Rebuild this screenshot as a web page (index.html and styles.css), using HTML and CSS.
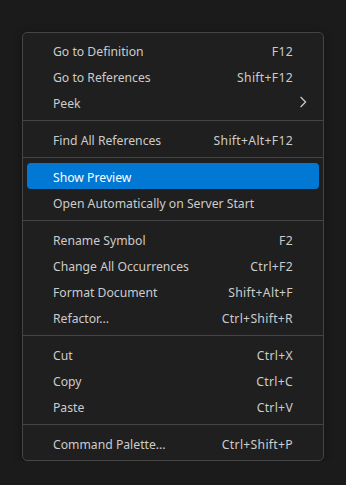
FILE: index.html
```html
<!DOCTYPE html>
<html>
<head>
<meta charset="utf-8">
<link rel="stylesheet" href="styles.css">
</head>
<body>
<div class="page">
  <div class="menu">
    <div class="item"><span class="label">Go to Definition</span><span class="key">F12</span></div>
    <div class="item"><span class="label">Go to References</span><span class="key">Shift+F12</span></div>
    <div class="item"><span class="label">Peek</span><span class="key"></span><span class="sub"><svg width="16" height="16" viewBox="0 0 16 16"><path d="M5.6 3 L10.6 8 L5.6 13" fill="none" stroke="#cccccc" stroke-width="1.2"/></svg></span></div>
    <div class="sep"></div>
    <div class="item"><span class="label">Find All References</span><span class="key">Shift+Alt+F12</span></div>
    <div class="sep"></div>
    <div class="item active"><span class="label">Show Preview</span><span class="key"></span></div>
    <div class="item"><span class="label">Open Automatically on Server Start</span><span class="key"></span></div>
    <div class="sep"></div>
    <div class="item"><span class="label">Rename Symbol</span><span class="key">F2</span></div>
    <div class="item"><span class="label">Change All Occurrences</span><span class="key">Ctrl+F2</span></div>
    <div class="item"><span class="label">Format Document</span><span class="key">Shift+Alt+F</span></div>
    <div class="item"><span class="label">Refactor...</span><span class="key">Ctrl+Shift+R</span></div>
    <div class="sep"></div>
    <div class="item"><span class="label">Cut</span><span class="key">Ctrl+X</span></div>
    <div class="item"><span class="label">Copy</span><span class="key">Ctrl+C</span></div>
    <div class="item"><span class="label">Paste</span><span class="key">Ctrl+V</span></div>
    <div class="sep"></div>
    <div class="item"><span class="label">Command Palette...</span><span class="key">Ctrl+Shift+P</span></div>
  </div>
</div>
</body>
</html>
```
FILE: styles.css
```css
html, body {
  margin: 0;
  padding: 0;
  background: #1b1b1b;
}
.page {
  padding: 32px 0 0 22px;
  display: flex;
  align-items: flex-start;
}
.menu {
  width: 302px;
  box-sizing: border-box;
  background: #1f1f1f;
  border: 1px solid #454545;
  border-radius: 5px;
  padding: 4px 0;
  box-shadow: 0 2px 8px rgba(0, 0, 0, 0.36);
  font-family: "Segoe UI", "Noto Sans", sans-serif;
  font-size: 12.2px;
  color: #cccccc;
}
.item {
  display: grid;
  grid-template-columns: 1fr auto 18px;
  align-items: center;
  box-sizing: border-box;
  height: 26px;
  margin: 0 4px;
  padding: 2px 8px 0 26px;
  border-radius: 4px;
  white-space: nowrap;
}
.item.active {
  background: #0078d4;
  color: #ffffff;
}
.key {
  text-align: right;
  letter-spacing: 0.3px;
}
.sub {
  display: flex;
  justify-content: flex-end;
  align-items: center;
  margin-top: -2px;
}
.sub svg {
  display: block;
}
.sep {
  height: 0;
  border-bottom: 1px solid #454545;
  margin: 5px 0;
}
```
